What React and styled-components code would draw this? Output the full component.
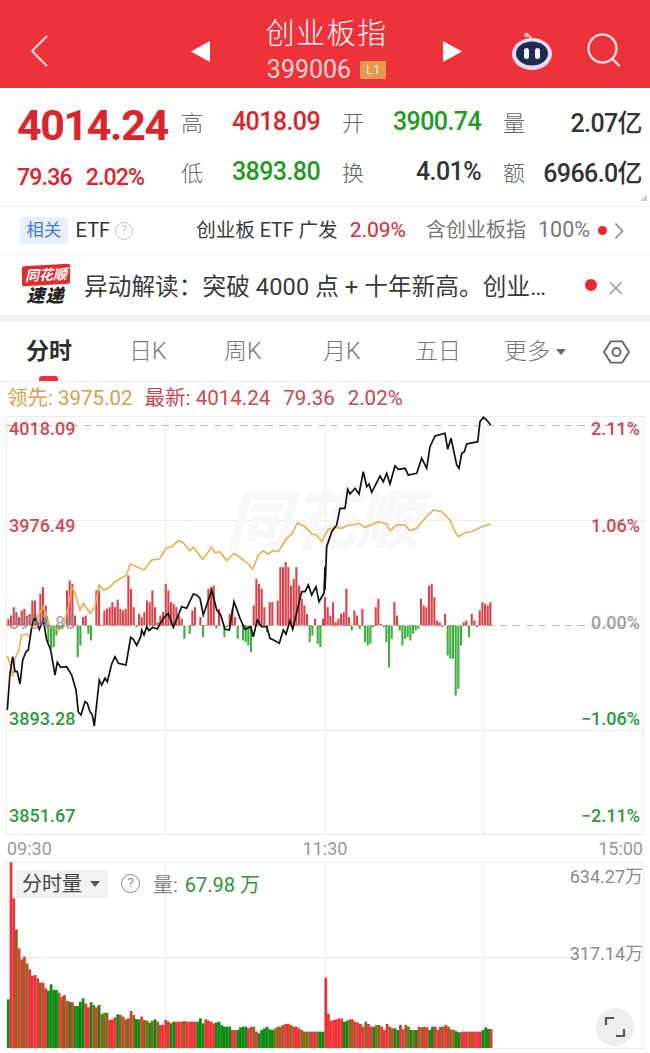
import React from "react";
import styled, { createGlobalStyle } from "styled-components";

const RED = "#ee3239";
const UP = "#d9252b";
const DOWN = "#1f9a25";
const INK = "#333333";
const FONT = `Roboto, "Noto Sans CJK SC", sans-serif`;

// traced from the chart, in 3x coordinates: left half and right half
const priceLeft = [[22,900],[30,790],[38,740],[45,785],[52,785],[60,822],[68,750],[78,725],[85,720],[95,650],[105,620],[118,658],[130,630],[140,690],[152,720],[165,795],[172,757],[182,772],[200,770],[215,795],[228,840],[235,905],[243,915],[255,875],[262,880],[270,905],[277,915],[283,948],[298,810],[305,825],[315,805],[322,815],[335,762],[345,740],[355,760],[378,765],[392,682],[400,688],[410,706],[422,680],[425,660],[432,675],[440,650],[447,662],[458,652],[472,657],[490,625],[505,610],[520,652],[545,590],[560,595],[580,552],[590,555],[600,565],[610,615],[635,540],[650,600],[662,615],[675,658],[688,660],[702,575],[720,625],[735,658],[752,650],[760,680],[772,630],[785,650],[800,650],[810,685],[825,692],[838,700],[850,660],[858,672],[870,632],[878,658],[905,545],[915,545],[925,525],[935,555],[948,530],[957,575],[972,550],[975,470]];
const priceRight = [[0,540],[5,410],[20,365],[35,345],[45,295],[60,295],[68,238],[75,252],[90,235],[102,252],[115,185],[125,230],[132,222],[140,247],[165,198],[175,215],[185,190],[195,222],[210,168],[220,178],[240,175],[250,195],[275,190],[290,145],[305,175],[315,110],[330,78],[360,70],[368,118],[378,85],[395,165],[402,175],[410,130],[418,125],[425,102],[458,95],[465,35],[475,22],[485,30],[497,45]];
const avgLeft = [[22,738],[30,760],[38,800],[45,745],[55,725],[65,675],[80,672],[90,680],[100,640],[130,590],[150,650],[175,660],[190,650],[205,590],[215,530],[225,550],[240,600],[250,580],[270,610],[285,590],[297,525],[310,540],[325,535],[345,515],[380,495],[390,462],[410,470],[432,480],[455,450],[478,447],[500,413],[515,410],[535,392],[550,398],[570,422],[580,412],[608,448],[635,412],[645,428],[660,425],[680,452],[702,430],[730,450],[745,462],[758,478],[775,435],[790,423],[805,432],[820,422],[835,425],[860,385],[875,372],[893,338],[915,350],[935,372],[950,375],[965,395],[975,375]];
const avgRight = [[0,375],[10,358],[30,352],[50,355],[70,345],[85,345],[100,340],[120,352],[160,335],[185,342],[195,362],[215,345],[240,345],[255,362],[275,355],[300,325],[325,300],[350,305],[375,330],[390,365],[400,380],[420,368],[440,365],[470,350],[497,342]];

const flowLeft = [20,30,55,40,25,45,50,30,35,75,75,10,95,115,60,-50,-70,-65,-30,-10,-10,0,105,135,125,30,-95,-60,25,30,-25,-45,0,105,105,0,45,50,55,70,55,78,50,45,50,150,110,55,-5,35,25,40,75,70,105,55,10,30,40,125,105,70,65,55,30,20,-40,0,-25,45,55,0,25,-35,0,110,115,120,-8,50,0,-35,-5,35,50,25,-40,0,-45,-50,-60,-80,60,140,125,110,55,-20,70,70,0,75,175,175,190,175,120,140,175,120,80,60,35,-50,-30,20,-55,-65,20];
const flowRight = [85,55,30,70,10,20,35,40,110,25,-15,45,30,-10,50,-50,-60,-55,-5,55,80,5,-5,-50,-125,-40,70,30,-15,-60,-40,-35,-45,-25,-15,-10,80,60,55,120,125,85,15,10,-5,35,-90,-100,-100,-210,-190,-60,10,15,-35,35,15,-5,45,70,65,60,70];

const volumeTops = [508,97,205,298,355,388,380,400,418,438,435,445,458,458,475,482,463,480,480,488,500,495,512,515,517,528,528,515,505,520,532,517,525,532,525,552,548,548,570,568,562,553,555,560,568,565,543,555,567,568,560,570,572,578,572,568,575,585,585,570,575,580,575,575,575,575,573,575,575,575,575,575,565,580,568,572,575,580,577,575,585,590,590,590,600,600,600,592,590,590,595,590,590,605,610,600,595,590,598,600,595,590,590,585,582,582,585,590,590,595,600,605,605,605,605,605,605,605,605,443,552,572,570,568,565,566,575,572,568,568,575,578,582,590,575,582,590,590,585,585,590,600,582,590,595,595,600,585,598,585,590,600,600,600,590,592,590,592,600,590,590,600,590,590,585,590,598,600,604,607,605,605,605,605,605,605,605,605,600,592,597,597];
const volumeColors =
  "grrbrbrbrrrrbrrggggbrbrgrggggrrgbrgbbbrrrgbrbbrbggrbbg" +
  "bgbrrrrggrrrbrrrrgggrrrrggggggrrggggrrbrggggggbbrbrrbrrrbbbbrrbggrr" +
  "rrrrrggbrbrrrbrrgbbrrrbrggrrbbgbgrbrrggrrbrrbrbggrrrbrrrrggg";
const volumeFill = { r: "#ee3338", g: "#0d8a12", b: "#7f6d1e" };

const toPoints = (list, dx) => list.map(([x, y]) => `${(dx + x / 3).toFixed(1)},${(410 + y / 3).toFixed(1)}`).join(" ");
const pricePoints = `${toPoints(priceLeft, 0)} ${toPoints(priceRight, 325)}`;
const avgPoints = `${toPoints(avgLeft, 0)} ${toPoints(avgRight, 325)}`;

const GlobalStyle = createGlobalStyle`
  html, body { margin: 0; padding: 0; background: #fff; }
  body { font-family: ${FONT}; overflow: hidden; }
  * { box-sizing: border-box; }
`;

const Page = styled.div`
  width: 650px;
  height: 1053px;
  overflow: hidden;
  display: flex;
  flex-direction: column;
  background: #fff;
  color: ${INK};
`;

const Header = styled.header`
  height: 88px;
  padding-top: 14px;
  background: ${RED};
  display: grid;
  grid-template-columns: 191px 271px 1fr;
  align-items: center;
  color: #fff;
`;

const BackBox = styled.div`
  padding-left: 29px;
  display: flex;
`;

const TitleGroup = styled.div`
  display: flex;
  align-items: center;
  justify-content: space-between;
`;

const TitleText = styled.div`
  display: flex;
  flex-direction: column;
  align-items: center;
  gap: 4px;
  margin-top: -4px;
`;

const Title = styled.div`
  font-size: 29px;
  line-height: 38px;
  letter-spacing: 1.5px;
  font-weight: 300;
`;

const CodeRow = styled.div`
  display: flex;
  align-items: center;
  gap: 9px;
  font-size: 25px;
  line-height: 26px;
  color: #fbd3d5;
`;

const LevelTag = styled.span`
  width: 26px;
  height: 18px;
  background: #e39a4e;
  color: #fde7c8;
  font-size: 13px;
  line-height: 18px;
  text-align: center;
`;

const HeaderTools = styled.div`
  display: flex;
  justify-content: flex-end;
  align-items: center;
  gap: 35px;
  padding-right: 29px;
`;

const Quote = styled.section`
  position: relative;
  height: 119px;
  padding: 0 8px 0 17px;
  display: flex;
  gap: 13px;
  border-bottom: 1px solid #eeeeee;
`;

const CornerMark = styled.span`
  position: absolute;
  right: 3px;
  bottom: 5px;
  border-left: 7px solid transparent;
  border-bottom: 7px solid #cfcfcf;
`;

const PriceColumn = styled.div`
  width: 151px;
  display: flex;
  flex-direction: column;
`;

const Price = styled.div`
  margin-top: 14px;
  font-size: 43px;
  line-height: 46px;
  font-weight: 700;
  color: ${UP};
  letter-spacing: -1.4px;
  white-space: nowrap;
`;

const Change = styled.div`
  margin-top: 16px;
  display: flex;
  gap: 14px;
  font-size: 23px;
  line-height: 28px;
  font-weight: 500;
  color: ${UP};
  letter-spacing: -0.8px;
`;

const Stats = styled.div`
  display: grid;
  grid-template-columns: repeat(3, 139px);
  grid-auto-rows: 50px;
  column-gap: 22px;
  padding-top: 8px;
`;

const Stat = styled.div`
  display: flex;
  align-items: center;
  justify-content: space-between;
`;

const StatLabel = styled.span`
  font-size: 22px;
  color: #666;
  font-weight: 300;
`;

const StatValue = styled.span`
  font-size: 25px;
  font-weight: 500;
  letter-spacing: -0.6px;
  white-space: nowrap;
  color: ${(p) => p.$color || INK};
`;

const Related = styled.section`
  height: 48px;
  padding: 0 26px 0 20px;
  display: flex;
  align-items: baseline;
  font-size: 20px;
  line-height: 46px;
  border-bottom: 1px solid #f1f1f1;
  white-space: nowrap;
`;

const RelatedTag = styled.span`
  align-self: center;
  width: 50px;
  height: 27px;
  border-radius: 3px;
  background: #e9f0fb;
  color: #3f7cd1;
  font-size: 17.5px;
  line-height: 27px;
  text-align: center;
  margin-right: 8px;
`;

const HelpMark = styled.span`
  align-self: center;
  width: ${(p) => p.$size}px;
  height: ${(p) => p.$size}px;
  margin-left: ${(p) => p.$left || 0}px;
  border: 1.5px solid ${(p) => p.$color};
  border-radius: 50%;
  color: ${(p) => p.$color};
  font-size: ${(p) => p.$size - 6}px;
  line-height: ${(p) => p.$size - 3}px;
  text-align: center;
  flex: none;
`;

const FundName = styled.span`
  margin-left: 63px;
  color: #3a3a3a;
  font-size: 19.6px;
`;

const FundRate = styled.span`
  margin-left: 12px;
  color: ${UP};
  font-size: 21px;
`;

const FundHolding = styled.span`
  margin-left: 20px;
  color: #777;
  display: flex;
  align-items: baseline;
  gap: 12px;
`;

const HoldingRate = styled.span`
  font-size: 21.5px;
`;

const Dot = styled.span`
  align-self: center;
  width: ${(p) => p.$size}px;
  height: ${(p) => p.$size}px;
  border-radius: 50%;
  background: #ee2530;
  flex: none;
`;

const RelatedDot = styled(Dot)`
  margin: 0 7px 0 8px;
`;

const ChevronBox = styled.span`
  align-self: center;
  display: flex;
`;

const News = styled.section`
  height: 60px;
  padding: 0 26px 0 21px;
  display: flex;
  align-items: center;
  white-space: nowrap;
`;

const Logo = styled.div`
  width: 49px;
  display: flex;
  flex-direction: column;
  align-items: center;
  flex: none;
`;

const LogoBanner = styled.div`
  width: 48px;
  height: 20px;
  background: #e02a2c;
  border-radius: 2px;
  color: #fff;
  font-size: 14px;
  line-height: 20px;
  font-weight: 700;
  font-style: italic;
  text-align: center;
  transform: skewY(-3deg);
`;

const LogoText = styled.div`
  margin-top: 1px;
  color: #222;
  font-size: 18px;
  line-height: 20px;
  font-weight: 900;
  font-style: italic;
  letter-spacing: 1px;
`;

const NewsText = styled.div`
  width: 515px;
  padding-left: 14px;
  flex: none;
  font-size: 23.6px;
  color: #3a3a3a;
  letter-spacing: 0.1px;
`;

const CloseMark = styled.span`
  margin-left: 11px;
  color: #a8a8a8;
  font-size: 30px;
  line-height: 25px;
  font-weight: 300;
`;

const Divider = styled.div`
  height: 7px;
  background: #f3f3f3;
`;

const Tabs = styled.nav`
  position: relative;
  height: 60px;
  display: grid;
  grid-template-columns: 26px 45px 58px 36px 59px 38px 61px 37px 55px 43px 46px 47px 5px 14px 33px 27px;
  align-items: center;
  border-bottom: 1px solid #eeeeee;
  font-size: 23px;
  line-height: 24px;
  color: #777;
`;

const Tab = styled.span`
  grid-column: ${(p) => p.$col};
  display: flex;
  white-space: nowrap;
  font-weight: ${(p) => (p.$active ? 700 : 300)};
  color: ${(p) => (p.$active ? "#2f2f2f" : "#777")};
`;

const TabBar = styled.span`
  position: absolute;
  left: 39px;
  bottom: 0;
  width: 19px;
  height: 5px;
  background: ${RED};
  border-radius: 3px 3px 0 0;
`;

const Caret = styled.span`
  grid-column: 14;
  justify-self: start;
  border-left: 5px solid transparent;
  border-right: 5px solid transparent;
  border-top: 6px solid #666;
`;

const Legend = styled.div`
  height: 33px;
  padding-left: 7px;
  display: flex;
  align-items: baseline;
  gap: 12px;
  font-size: 20.5px;
  line-height: 33px;
  color: #c9474e;
  white-space: nowrap;
`;

const LegendLead = styled.span`
  color: #d9a04e;
`;

const LegendGroup = styled.span`
  display: flex;
  align-items: baseline;
  gap: 13px;
`;

const PricePanel = styled.div`
  position: relative;
  height: 420px;
`;

const Chart = styled.svg`
  display: block;
`;

const Watermark = styled.text`
  font-family: ${FONT};
  font-size: 65px;
  font-weight: 900;
  font-style: italic;
  fill: #f8f8f8;
`;

const AxisColumn = styled.div`
  position: absolute;
  top: 4px;
  bottom: 9px;
  ${(p) => (p.$right ? "right: 10px; align-items: flex-end;" : "left: 9px;")}
  display: flex;
  flex-direction: column;
  justify-content: space-between;
`;

const AxisLabel = styled.span`
  font-size: 18px;
  line-height: 20px;
  font-weight: 500;
  color: ${(p) => p.$color};
`;

const TimeAxis = styled.div`
  height: 27px;
  padding: 0 7px;
  display: flex;
  align-items: center;
  justify-content: space-between;
  font-size: 18px;
  color: #999;
`;

const VolumePanel = styled.div`
  position: relative;
  height: 191px;
`;

const VolumeBar = styled.div`
  position: absolute;
  left: 15px;
  top: 7px;
  display: flex;
  align-items: center;
  font-size: 20px;
  white-space: nowrap;
`;

const VolumeTag = styled.span`
  width: 93px;
  height: 28px;
  padding-left: 7px;
  background: #f2f2f2;
  color: #444;
  line-height: 28px;
  display: flex;
  align-items: center;
  gap: 8px;
`;

const TagCaret = styled.span`
  border-left: 5px solid transparent;
  border-right: 5px solid transparent;
  border-top: 6px solid #555;
`;

const VolumeName = styled.span`
  margin-left: 13px;
  color: #888;
`;

const VolumeValue = styled.span`
  margin-left: 7px;
  color: #2c9440;
`;

const VolumeScale = styled.span`
  position: absolute;
  right: 7px;
  top: ${(p) => p.$top}px;
  font-size: 18px;
  line-height: 20px;
  color: #8b8b8b;
`;

const ExpandButton = styled.div`
  position: absolute;
  left: 596px;
  top: 146px;
  width: 38px;
  height: 38px;
  border-radius: 50%;
  background: #eeeeee;
  display: flex;
  align-items: center;
  justify-content: center;
`;

const BackIcon = () => (
  <svg width="20" height="34" viewBox="0 0 20 34" fill="none" stroke="#fbdcdd" strokeWidth="2">
    <path d="M18 2 3 17l15 15" />
  </svg>
);

const Triangle = ({ flip }) => (
  <svg width="19" height="21" viewBox="0 0 19 21" fill="#fff">
    <path d={flip ? "M0 0l19 10.5L0 21z" : "M19 0L0 10.5 19 21z"} />
  </svg>
);

const RobotIcon = () => (
  <svg width="40" height="38" viewBox="0 0 40 38">
    <path d="M19 8c0-2-1-4-3-5" fill="none" stroke="#f3d9e2" strokeWidth="1.6" />
    <circle cx="14.5" cy="3" r="2.2" fill="#f0c9d6" />
    <ellipse cx="20" cy="22" rx="20" ry="16" fill="#e9dcf5" />
    <ellipse cx="20" cy="21.5" rx="16" ry="12" fill="#1e2c50" />
    <rect x="12" y="16" width="5" height="11" rx="2.5" fill="#f4f6ff" />
    <rect x="23" y="16" width="5" height="11" rx="2.5" fill="#f4f6ff" />
  </svg>
);

const SearchIcon = () => (
  <svg width="34" height="36" viewBox="0 0 34 36" fill="none" stroke="#fde8e8" strokeWidth="2.2">
    <circle cx="15.5" cy="15.5" r="14" />
    <path d="M26 26.5l6 6" strokeLinecap="round" />
  </svg>
);

const Chevron = () => (
  <svg width="10" height="18" viewBox="0 0 10 18" fill="none" stroke="#888" strokeWidth="1.6">
    <path d="M1.5 1.5 8.5 9l-7 7.5" />
  </svg>
);

const SettingsIcon = () => (
  <svg width="28" height="28" viewBox="0 0 28 28" fill="none" stroke="#666" strokeWidth="2">
    <path d="M8 3h12l7 11-7 11H8L1 14z" strokeLinejoin="round" />
    <circle cx="14" cy="14" r="4.2" />
  </svg>
);

const ExpandIcon = () => (
  <svg width="22" height="22" viewBox="0 0 22 22" fill="none" stroke="#555" strokeWidth="2.2">
    <path d="M2 9V2h8M20 13v7h-8" />
  </svg>
);

const PriceChart = () => (
  <Chart width="650" height="420" viewBox="0 415 650 420">
    <g stroke="#ececec" strokeWidth="1" fill="none">
      <path d="M6.5 416.5h637v418h-637z" />
      <path d="M6 520.5h637M6 730.5h637M165.5 416v419M325.5 416v419M483.5 416v419" />
    </g>
    <g stroke="#b5b5b5" strokeWidth="1" strokeDasharray="7 6">
      <path d="M6 425.5h637M6 625.5h637" />
    </g>
    <Watermark x="226" y="544">同花顺</Watermark>
    {flowLeft.map((v, i) => (
      <rect key={i} x={(25 + i * 8) / 3 - 1} y={v > 0 ? 625.5 - v / 3 : 625.5} width="2.1" height={Math.abs(v) / 3} fill={v > 0 ? "#d9444b" : "#3fae3f"} />
    ))}
    {flowRight.map((v, i) => (
      <rect key={i} x={325 + (i * 8) / 3 - 1} y={v > 0 ? 625.5 - v / 3 : 625.5} width="2.1" height={Math.abs(v) / 3} fill={v > 0 ? "#d9444b" : "#3fae3f"} />
    ))}
    <polyline points={avgPoints} fill="none" stroke="#e9ae4e" strokeWidth="1.6" />
    <polyline points={pricePoints} fill="none" stroke="#111" strokeWidth="1.7" />
  </Chart>
);

const VolumeChart = () => (
  <Chart width="650" height="191" viewBox="0 862 650 191">
    <g stroke="#ececec" strokeWidth="1" fill="none">
      <path d="M6 862.5h637M6 957.5h637M6 1048.5h637M6.5 862v187M643.5 862v187M165.5 862v187M325.5 862v187M483.5 862v187" />
    </g>
    {volumeTops.map((top, i) => {
      const y = 830 + top / 3;
      return (
        <rect key={i} x={7 + i * 2.667} y={y} width="2.8" height={1048 - y} fill={volumeFill[volumeColors[i]] || volumeFill.r} />
      );
    })}
  </Chart>
);

export default function App() {
  return (
    <Page>
      <GlobalStyle />
      <Header>
        <BackBox>
          <BackIcon />
        </BackBox>
        <TitleGroup>
          <Triangle />
          <TitleText>
            <Title>创业板指</Title>
            <CodeRow>
              399006
              <LevelTag>L1</LevelTag>
            </CodeRow>
          </TitleText>
          <Triangle flip />
        </TitleGroup>
        <HeaderTools>
          <RobotIcon />
          <SearchIcon />
        </HeaderTools>
      </Header>

      <Quote>
        <PriceColumn>
          <Price>4014.24</Price>
          <Change>
            <span>79.36</span>
            <span>2.02%</span>
          </Change>
        </PriceColumn>
        <Stats>
          <Stat>
            <StatLabel>高</StatLabel>
            <StatValue $color={UP}>4018.09</StatValue>
          </Stat>
          <Stat>
            <StatLabel>开</StatLabel>
            <StatValue $color={DOWN}>3900.74</StatValue>
          </Stat>
          <Stat>
            <StatLabel>量</StatLabel>
            <StatValue>2.07亿</StatValue>
          </Stat>
          <Stat>
            <StatLabel>低</StatLabel>
            <StatValue $color={DOWN}>3893.80</StatValue>
          </Stat>
          <Stat>
            <StatLabel>换</StatLabel>
            <StatValue>4.01%</StatValue>
          </Stat>
          <Stat>
            <StatLabel>额</StatLabel>
            <StatValue>6966.0亿</StatValue>
          </Stat>
        </Stats>
        <CornerMark />
      </Quote>

      <Related>
        <RelatedTag>相关</RelatedTag>
        <span>ETF</span>
        <HelpMark $size={18} $left={5} $color="#c4c4c4">?</HelpMark>
        <FundName>创业板 ETF 广发</FundName>
        <FundRate>2.09%</FundRate>
        <FundHolding>
          <span>含创业板指</span>
          <HoldingRate>100%</HoldingRate>
        </FundHolding>
        <RelatedDot $size={9} />
        <ChevronBox>
          <Chevron />
        </ChevronBox>
      </Related>

      <News>
        <Logo>
          <LogoBanner>同花顺</LogoBanner>
          <LogoText>速递</LogoText>
        </Logo>
        <NewsText>异动解读：突破 4000 点 + 十年新高。创业…</NewsText>
        <Dot $size={12} />
        <CloseMark>×</CloseMark>
      </News>
      <Divider />

      <Tabs>
        <Tab $col={2} $active>分时</Tab>
        <Tab $col={4}>日K</Tab>
        <Tab $col={6}>周K</Tab>
        <Tab $col={8}>月K</Tab>
        <Tab $col={10}>五日</Tab>
        <Tab $col={12}>更多</Tab>
        <Caret />
        <Tab $col={16}><SettingsIcon /></Tab>
        <TabBar />
      </Tabs>

      <Legend>
        <LegendLead>领先: 3975.02</LegendLead>
        <LegendGroup>
          <span>最新: 4014.24</span>
          <span>79.36</span>
          <span>2.02%</span>
        </LegendGroup>
      </Legend>

      <PricePanel>
        <PriceChart />
        <AxisColumn>
          <AxisLabel $color="#d4474f">4018.09</AxisLabel>
          <AxisLabel $color="#d4474f">3976.49</AxisLabel>
          <AxisLabel $color="rgba(140,140,150,0.75)">3934.88</AxisLabel>
          <AxisLabel $color="#2a9a3a">3893.28</AxisLabel>
          <AxisLabel $color="#2a9a3a">3851.67</AxisLabel>
        </AxisColumn>
        <AxisColumn $right>
          <AxisLabel $color="#d4474f">2.11%</AxisLabel>
          <AxisLabel $color="#d4474f">1.06%</AxisLabel>
          <AxisLabel $color="#a0a0a0">0.00%</AxisLabel>
          <AxisLabel $color="#2a9a3a">−1.06%</AxisLabel>
          <AxisLabel $color="#2a9a3a">−2.11%</AxisLabel>
        </AxisColumn>
      </PricePanel>

      <TimeAxis>
        <span>09:30</span>
        <span>11:30</span>
        <span>15:00</span>
      </TimeAxis>

      <VolumePanel>
        <VolumeChart />
        <VolumeBar>
          <VolumeTag>
            分时量
            <TagCaret />
          </VolumeTag>
          <HelpMark $size={19} $left={13} $color="#8a8a8a">?</HelpMark>
          <VolumeName>量:</VolumeName>
          <VolumeValue>67.98 万</VolumeValue>
        </VolumeBar>
        <VolumeScale $top={5}>634.27万</VolumeScale>
        <VolumeScale $top={82}>317.14万</VolumeScale>
        <ExpandButton>
          <ExpandIcon />
        </ExpandButton>
      </VolumePanel>
    </Page>
  );
}
